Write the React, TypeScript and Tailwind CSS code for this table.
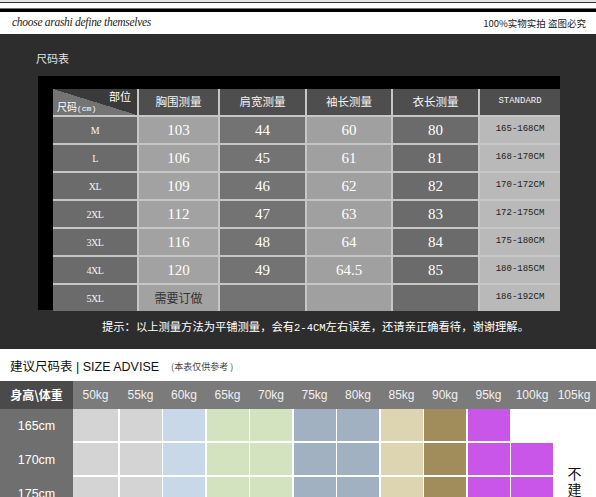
const cols = ["#6b6b6b", "#a2a2a2", "#737373", "#a0a0a0", "#6b6b6b", "#b9b9b9"];

const rows = [
  ["M", "103", "44", "60", "80", "165-168CM"],
  ["L", "106", "45", "61", "81", "168-170CM"],
  ["XL", "109", "46", "62", "82", "170-172CM"],
  ["2XL", "112", "47", "63", "83", "172-175CM"],
  ["3XL", "116", "48", "64", "84", "175-180CM"],
  ["4XL", "120", "49", "64.5", "85", "180-185CM"],
  ["5XL", "需要订做", "", "", "", "186-192CM"],
];

const kgs = ["50kg", "55kg", "60kg", "65kg", "70kg", "75kg", "80kg", "85kg", "90kg", "95kg", "100kg", "105kg"];
const swatch = ["#d4d4d4", "#d4d4d4", "#c9d8e8", "#d4e3bf", "#d4e3bf", "#a1b1c1", "#a1b1c1", "#ddd4b2", "#a18d5c", "#c956e8", "#c956e8"];
const heights = ["165cm", "170cm", "175cm"];

function SizeTable() {
  return (
    <div className="grid grid-cols-[84px_79px_85px_84px_85px_80px] gap-[2px] bg-[#c6c6c6]">
      <div className="relative h-[26px] bg-[linear-gradient(to_top_right,#747474_50%,#3a3a3a_50%)] text-white">
        <span className="absolute right-[6px] top-[2px] text-[11px] leading-none font-['Noto_Sans_CJK_SC',sans-serif]">部位</span>
        <span className="absolute left-[4px] bottom-[2px] text-[10px] leading-none font-['Noto_Sans_CJK_SC',sans-serif]">
          尺码<span className="font-['Liberation_Mono',monospace] text-[8px]">(cm)</span>
        </span>
      </div>
      {["胸围测量", "肩宽测量", "袖长测量", "衣长测量"].map((h) => (
        <div key={h} className="h-[26px] bg-[#4e4e4e] flex items-center justify-center text-[11.5px] text-[#f2f2f2] font-['Noto_Sans_CJK_SC',sans-serif]">
          {h}
        </div>
      ))}
      <div className="h-[26px] bg-[#4e4e4e] flex items-center justify-center text-[9px] text-[#f2f2f2] font-['Liberation_Mono',monospace]">
        STANDARD
      </div>
      {rows.map((r) =>
        r.map((v, i) => (
          <div
            key={r[0] + i}
            className={
              "h-[26px] flex items-center justify-center " +
              (i === 0
                ? "text-[10px] text-[#f4f4f4] tracking-tighter font-['Liberation_Serif',serif]"
                : i === 5
                ? "text-[9px] text-[#222] font-['Liberation_Mono',monospace]"
                : v === "需要订做"
                ? "text-[12px] text-[#333] font-['Noto_Sans_CJK_SC',sans-serif]"
                : "text-[15px] text-white font-['Liberation_Serif',serif]")
            }
            style={{ backgroundColor: cols[i] }}
          >
            {v}
          </div>
        ))
      )}
    </div>
  );
}

export default function App() {
  return (
    <div className="w-[596px] h-[497px] overflow-hidden bg-white">
      {/* top rules */}
      <div className="h-[2px] bg-[#e6e6e6]" />
      <div className="h-px bg-[#333]" />
      <div className="h-[5px] bg-white" />
      <div className="h-px bg-[#777]" />
      <div className="h-[3px] bg-black" />

      <div className="h-[22px] flex items-center justify-between pl-[12px] pr-[10px]">
        <span className="text-[11.5px] italic text-[#222] font-['Liberation_Serif',serif] tracking-tight">
          choose arashi define themselves
        </span>
        <span className="text-[9.5px] text-[#222] font-['Noto_Sans_CJK_SC',sans-serif]">100%实物实拍 盗图必究</span>
      </div>

      {/* dark panel */}
      <div className="h-[315px] bg-[#2d2d2d] pt-[17px]">
        <div className="pl-[36px] text-[11px] leading-[14px] text-[#e0e0e0] font-['Noto_Sans_CJK_SC',sans-serif]">尺码表</div>
        <div className="mt-[11px] ml-[38px] w-[522px] h-[234px] bg-black pl-[15px] pt-[13px]">
          <SizeTable />
        </div>
        <div className="mt-[8px] pl-[102px] text-[11.3px] text-white font-['Noto_Sans_CJK_SC',sans-serif]">
          提示：以上测量方法为平铺测量，会有<span className="font-['Liberation_Mono',monospace] text-[10.5px]">2-4CM</span>左右误差，还请亲正确看待，谢谢理解。
        </div>
      </div>

      {/* size advise */}
      <div className="h-[32px] flex items-center pl-[10px] pt-[4px]">
        <span className="text-[12.5px] text-[#111] font-['Liberation_Sans','Noto_Sans_CJK_SC',sans-serif]">
          建议尺码表 | SIZE ADVISE
        </span>
        <span className="ml-[12px] text-[9px] text-[#444] font-['Noto_Sans_CJK_SC',sans-serif]">(本表仅供参考 )</span>
      </div>

      <div className="flex h-[28px] bg-[#7b7b7b]">
        <div className="w-[73px] bg-[#4a4a4a] flex items-center justify-center text-[12px] font-bold text-white font-['Noto_Sans_CJK_SC',sans-serif]">
          身高\体重
        </div>
        <div className="grid grid-cols-[45px_repeat(10,42px)_39px] gap-x-[1.5px] items-center">
          {kgs.map((k) => (
            <div key={k} className="text-center text-[12px] text-[#f0f0f0] font-['Liberation_Sans',sans-serif]">
              {k}
            </div>
          ))}
        </div>
      </div>

      <div className="flex">
        <div className="w-[73px] bg-[#6f6f6f] flex flex-col">
          {heights.map((h) => (
            <div key={h} className="h-[34px] flex items-center justify-center text-[12.5px] text-white font-['Liberation_Sans',sans-serif]">
              {h}
            </div>
          ))}
        </div>
        <div className="grid grid-cols-[45px_repeat(10,42px)] gap-x-[1.5px] gap-y-[2px] auto-rows-[32px]">
          {heights.map((h, r) =>
            swatch.map((c, i) => (
              <div key={h + i} style={{ backgroundColor: r === 0 && i === 10 ? "#ffffff" : c }} />
            ))
          )}
        </div>
        <div className="flex-1 flex flex-col items-center pt-[56px] text-[14px] leading-[16px] text-[#111] font-['Noto_Sans_CJK_SC',sans-serif]">
          <span>不</span>
          <span>建</span>
          <span>议</span>
        </div>
      </div>
    </div>
  );
}
